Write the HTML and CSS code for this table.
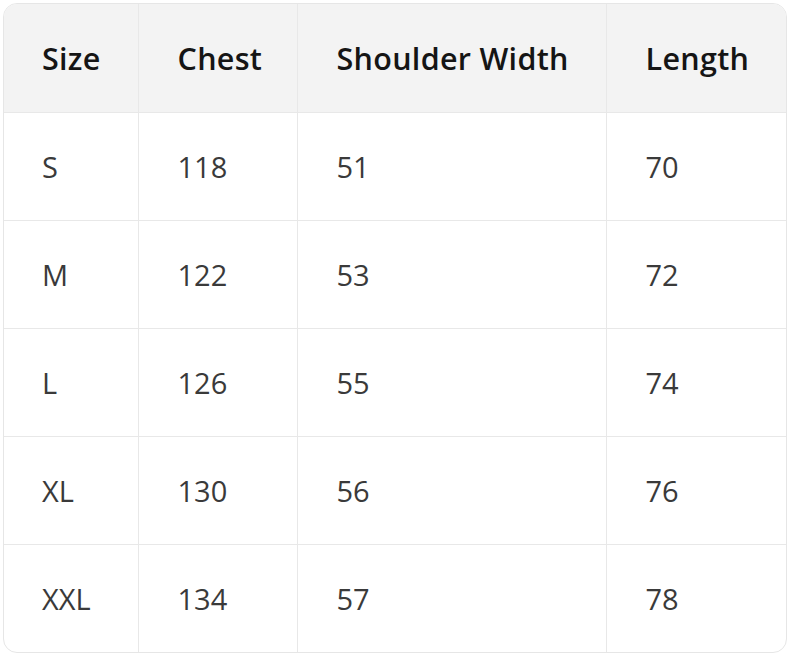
FILE: index.html
```html
<!DOCTYPE html>
<html>
<head>
<meta charset="utf-8">
<link rel="stylesheet" href="styles.css">
</head>
<body>
<div class="wrap">
<table class="sizes">
<colgroup><col class="c1"><col class="c2"><col class="c3"><col class="c4"></colgroup>
<thead>
<tr><th>Size</th><th>Chest</th><th>Shoulder Width</th><th>Length</th></tr>
</thead>
<tbody>
<tr><td>S</td><td>118</td><td>51</td><td>70</td></tr>
<tr><td>M</td><td>122</td><td>53</td><td>72</td></tr>
<tr><td>L</td><td>126</td><td>55</td><td>74</td></tr>
<tr><td>XL</td><td>130</td><td>56</td><td>76</td></tr>
<tr><td>XXL</td><td>134</td><td>57</td><td>78</td></tr>
</tbody>
</table>
</div>
</body>
</html>
```
FILE: styles.css
```css
html, body { margin: 0; padding: 0; background: #fff; }
body { padding: 3px 0 0 3px; font-family: "Open Sans", "Noto Sans", sans-serif; }
.wrap {
  width: 782px;
  height: 648px;
  border: 1px solid #e6e6e6;
  border-radius: 14px;
  overflow: hidden;
}
.sizes {
  width: 100%;
  border-collapse: collapse;
  table-layout: fixed;
}
.c1 { width: 134px; }
.c2 { width: 159px; }
.c3 { width: 309px; }
.c4 { width: auto; }
th, td {
  height: 108px;
  padding: 0 0 0 39px;
  text-align: left;
  border-right: 1px solid #e8e8e8;
  border-bottom: 1px solid #e8e8e8;
  box-sizing: border-box;
  font-size: 29px;
  white-space: nowrap;
}
th:first-child, td:first-child { padding-left: 38px; }
th:last-child, td:last-child { border-right: none; }
tbody tr:last-child td { border-bottom: none; }
th {
  background: #f3f3f3;
  color: #151515;
  font-weight: 600;
  font-size: 30.5px;
  letter-spacing: 0.3px;
}
td {
  color: #3a3a3a;
  font-weight: 400;
}
```
